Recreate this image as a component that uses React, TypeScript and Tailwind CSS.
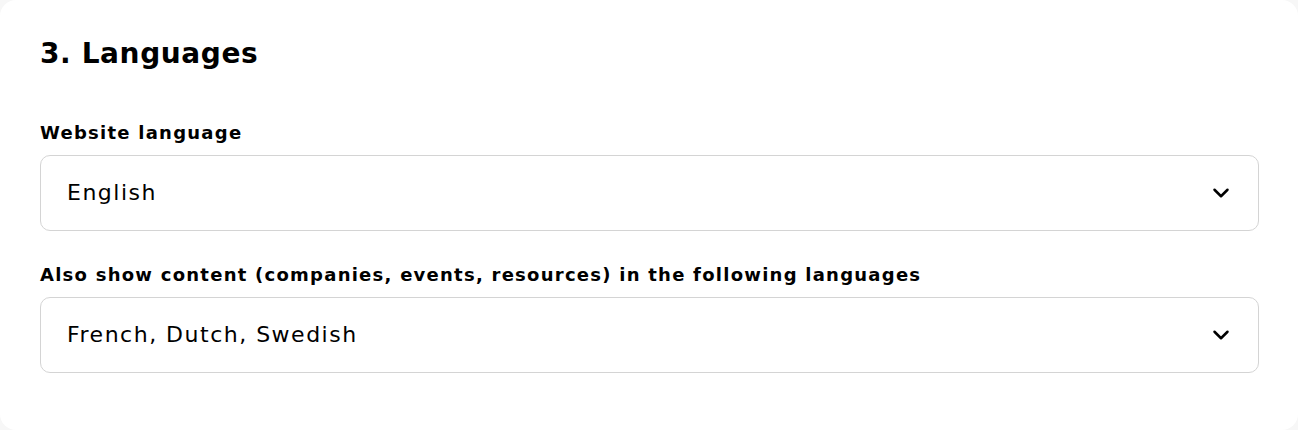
import { ChevronDown } from 'lucide-react';

const fields = [
  { label: "Website language", value: "English" },
  { label: "Also show content (companies, events, resources) in the following languages", value: "French, Dutch, Swedish" },
];

export default function App() {
  return (
    <div className="min-h-[430px] bg-[#f7f7f7] font-['DejaVu_Sans',sans-serif] text-black">
      <div className="bg-white rounded-2xl h-[430px] pl-10 pr-[39px] pt-[36px]">
        <h2 className="text-[28px] font-bold leading-[36px] tracking-[0.6px]">3. Languages</h2>

        <div className="mt-[48px] flex flex-col gap-[31px]">
          {fields.map((f, i) => (
            <div key={i}>
              <label className="block text-[18px] font-semibold leading-[26px] mb-[9px] tracking-[1.25px]">{f.label}</label>
              <button className="w-full h-[76px] rounded-[10px] border border-[#d4d4d4] bg-white flex items-center justify-between pl-[26px] pr-[24px] text-left">
                <span className="text-[22px] leading-[30px] tracking-[1.5px]">{f.value}</span>
                <ChevronDown size={26} strokeWidth={2.3} />
              </button>
            </div>
          ))}
        </div>
      </div>
    </div>
  );
}
